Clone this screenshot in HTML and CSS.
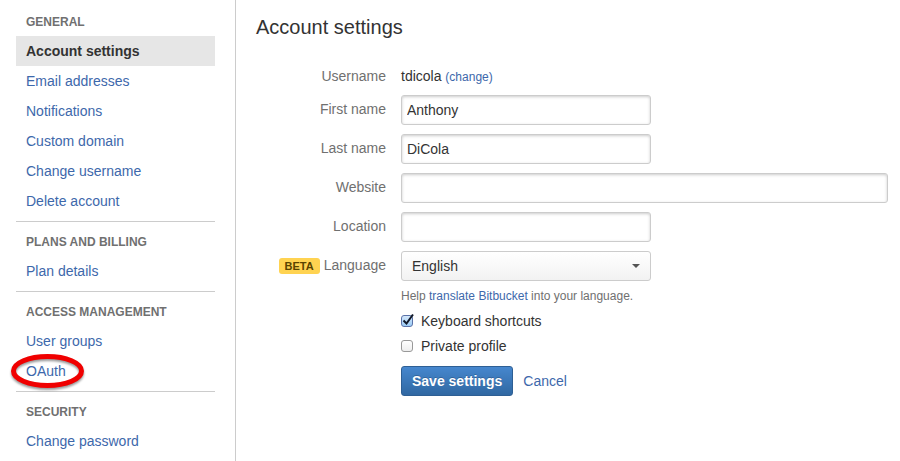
FILE: index.html
```html
<!DOCTYPE html>
<html lang="en">
<head>
<meta charset="utf-8">
<meta name="viewport" content="width=device-width, initial-scale=1">
<title>Account settings</title>
<link rel="stylesheet" href="styles.css">
</head>
<body>
<div class="page">
  <nav class="sidebar" aria-label="Settings">
    <section class="nav-group">
      <h2>GENERAL</h2>
      <ul>
        <li><a class="selected" href="#account" aria-current="page">Account settings</a></li>
        <li><a href="#email">Email addresses</a></li>
        <li><a href="#notifications">Notifications</a></li>
        <li><a href="#domain">Custom domain</a></li>
        <li><a href="#username">Change username</a></li>
        <li><a href="#delete">Delete account</a></li>
      </ul>
    </section>
    <section class="nav-group">
      <h2>PLANS AND BILLING</h2>
      <ul>
        <li><a href="#plan">Plan details</a></li>
      </ul>
    </section>
    <section class="nav-group">
      <h2>ACCESS MANAGEMENT</h2>
      <ul>
        <li><a href="#groups">User groups</a></li>
        <li class="marked">
          <a href="#oauth">OAuth</a>
          <svg class="ring" viewBox="0 0 80 42" aria-hidden="true"><ellipse cx="38.5" cy="19" rx="34" ry="14.5"/></svg>
        </li>
      </ul>
    </section>
    <section class="nav-group">
      <h2>SECURITY</h2>
      <ul>
        <li><a href="#password">Change password</a></li>
      </ul>
    </section>
  </nav>
  <main class="content">
    <h1>Account settings</h1>
    <form class="form">
      <div class="row">
        <span class="label plain">Username</span>
        <div class="field">tdicola <a class="small" href="#username">(change)</a></div>
      </div>
      <div class="row">
        <label class="label" for="first">First name</label>
        <div class="field"><input class="text" id="first" type="text" value="Anthony"></div>
      </div>
      <div class="row">
        <label class="label" for="last">Last name</label>
        <div class="field"><input class="text" id="last" type="text" value="DiCola"></div>
      </div>
      <div class="row">
        <label class="label" for="website">Website</label>
        <div class="field"><input class="text wide" id="website" type="text"></div>
      </div>
      <div class="row">
        <label class="label" for="location">Location</label>
        <div class="field"><input class="text" id="location" type="text"></div>
      </div>
      <div class="row">
        <label class="label" for="language"><span class="badge">BETA</span>Language</label>
        <div class="field">
          <div class="select">
            <select id="language"><option>English</option></select>
          </div>
          <p class="help">Help <a href="#translate">translate Bitbucket</a> into your language.</p>
          <div class="check">
            <span class="box">
              <input id="shortcuts" type="checkbox" checked>
              <svg class="tick" viewBox="0 0 14 14" aria-hidden="true"><path d="M2.5 7.5L5.5 10.5L12 1.5"/></svg>
            </span>
            <label for="shortcuts">Keyboard shortcuts</label>
          </div>
          <div class="check">
            <span class="box">
              <input id="private" type="checkbox">
              <svg class="tick" viewBox="0 0 14 14" aria-hidden="true"><path d="M2.5 7.5L5.5 10.5L12 1.5"/></svg>
            </span>
            <label for="private">Private profile</label>
          </div>
          <div class="actions">
            <button type="button">Save settings</button>
            <a href="#cancel">Cancel</a>
          </div>
        </div>
      </div>
    </form>
  </main>
</div>
</body>
</html>
```
FILE: styles.css
```css
* {
  box-sizing: border-box;
}

body {
  margin: 0;
  background: #fff;
  color: #333;
  font: 14px/20px "Liberation Sans", Arial, sans-serif;
}

h1, h2, ul, p {
  margin: 0;
  padding: 0;
}

a {
  color: #3d68ab;
  text-decoration: none;
}

.page {
  display: flex;
  min-height: 100vh;
}

/* Sidebar */
.sidebar {
  flex: 0 0 236px;
  padding: 2px 20px 0 16px;
  border-right: 1px solid #ccc;
}

.nav-group {
  padding-bottom: 5px;
}

.nav-group + .nav-group {
  border-top: 1px solid #ccc;
}

.nav-group h2 {
  padding: 10px 10px 4px;
  color: #707070;
  font-size: 12px;
  line-height: 20px;
}

.nav-group ul {
  list-style: none;
}

.nav-group li a {
  display: block;
  padding: 5px 10px;
}

.nav-group li .selected {
  background: #e6e6e6;
  color: #333;
  font-weight: bold;
}

.marked {
  position: relative;
}

.ring {
  position: absolute;
  top: -4px;
  left: -7px;
  width: 80px;
  height: 42px;
  pointer-events: none;
  fill: none;
  stroke: #f00000;
  stroke-width: 5;
  filter: drop-shadow(0 2px 1px rgba(0, 0, 0, 0.4));
}

/* Form */
.content {
  flex: 1;
  min-width: 0;
  padding: 15px 12px 15px 20px;
}

h1 {
  margin-bottom: 27px;
  font-size: 20px;
  font-weight: normal;
  line-height: 24px;
}

.form {
  display: flex;
  flex-direction: column;
  gap: 9px;
}

.row {
  display: grid;
  grid-template-columns: 130px minmax(0, 1fr);
  column-gap: 15px;
}

.label {
  padding-top: 4px;
  color: #707070;
  text-align: right;
}

.plain {
  padding-top: 0;
}

.small {
  font-size: 12px;
  line-height: 16px;
}

.badge {
  display: inline-block;
  margin-right: 4px;
  padding: 0 6px;
  border-radius: 3px;
  background: #ffd351;
  color: #594300;
  font-size: 11px;
  font-weight: bold;
  line-height: 16px;
}

.text,
.select select {
  display: block;
  width: 250px;
  max-width: 100%;
  height: 30px;
  border: 1px solid #ccc;
  border-radius: 3px;
  color: #333;
  font: inherit;
}

.text {
  padding: 4px 5px;
  background: #fff;
  box-shadow: inset 0 1px 3px #ccc;
}

.text.wide {
  width: 100%;
}

.select {
  position: relative;
  width: 250px;
  max-width: 100%;
}

.select select {
  padding: 0 10px;
  background: linear-gradient(#fff, #f2f2f2);
  appearance: none;
}

.select::after {
  content: "";
  position: absolute;
  top: 13px;
  right: 11px;
  border: 4px solid transparent;
  border-top-color: #555;
  border-bottom: 0;
  pointer-events: none;
}

.help {
  margin-top: 5px;
  color: #707070;
  font-size: 12px;
}

.check {
  display: flex;
  align-items: center;
  gap: 8px;
  margin-top: 5px;
}

.box {
  position: relative;
  display: flex;
}

.box input {
  width: 12px;
  height: 12px;
  margin: 0;
  border: 1px solid #999;
  border-radius: 3px;
  background: linear-gradient(#fff, #eee);
  appearance: none;
}

.box input:checked {
  border-color: #5b72a8;
  background: linear-gradient(#d5e8fb, #9bcbf5);
}

.tick {
  position: absolute;
  top: -2px;
  left: 0;
  display: none;
  width: 14px;
  height: 14px;
  fill: none;
  stroke: #101828;
  stroke-width: 2;
  pointer-events: none;
}

.box input:checked + .tick {
  display: block;
}

.actions {
  display: flex;
  align-items: center;
  gap: 10px;
  margin-top: 10px;
}

.actions button {
  height: 30px;
  padding: 0 10px;
  border: 1px solid #2e5f94;
  border-radius: 3px;
  background: linear-gradient(#4687ce, #3068a2);
  color: #fff;
  font: inherit;
  font-weight: bold;
  text-shadow: 0 -1px 0 rgba(0, 0, 0, 0.2);
}
```
